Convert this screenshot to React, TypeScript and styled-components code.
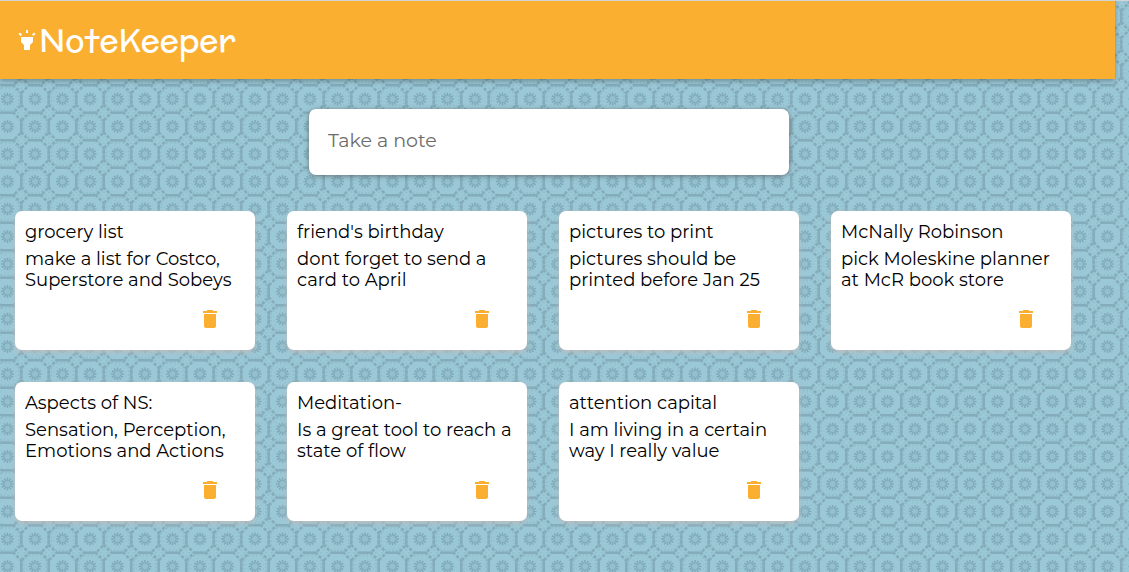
import React from 'react';
import styled, { createGlobalStyle } from 'styled-components';
import { MdDelete, MdHighlight } from 'react-icons/md';

type Point = [number, number];

const TILE = 55;
const HALF = TILE / 2;
const EDGE = HALF / 2;

const around = (count: number, radius: number, turn = 0): Point[] =>
  Array.from({ length: count }, (_, i) => {
    const a = ((i + turn) / count) * Math.PI * 2;
    return [Math.cos(a) * radius, Math.sin(a) * radius];
  });

const dots = (points: Point[], cx: number, cy: number, r: number, fill: string) =>
  points
    .map(([x, y]) => `<circle cx='${(cx + x).toFixed(1)}' cy='${(cy + y).toFixed(1)}' r='${r}' fill='${fill}'/>`)
    .join('');

/* Octagon whose straight sides lie on the cell border and whose corners are cut off. */
const octagon = (cx: number, cy: number, reach: number, side: number) => {
  const corners: Point[] = [
    [-side, -reach], [side, -reach], [reach, -side], [reach, side],
    [side, reach], [-side, reach], [-reach, side], [-reach, -side],
  ];
  return corners.map(([x, y]) => `${cx + x},${cy + y}`).join(' ');
};

/* One octagon of the wallpaper: its beaded rim, optional lace and a twelve-petal flower. */
const medallion = (cx: number, cy: number, laced: boolean) => {
  const petals = around(12, 1)
    .map(([x, y]) => `M${cx + x * 3} ${cy + y * 3}L${cx + x * 6.6} ${cy + y * 6.6}`)
    .join('');
  const lace = laced
    ? `<polygon points='${octagon(cx, cy, 11.2, 6)}' fill='none' stroke='#8fbdc9' stroke-width='2' stroke-dasharray='1.8 1.8'/>` +
      dots(around(12, 8.6, 0.5), cx, cy, 0.8, '#91c1cc')
    : '';
  return (
    lace +
    `<circle cx='${cx}' cy='${cy}' r='4.4' fill='#92bfce'/>` +
    `<path d='${petals}' stroke='#80aabb' stroke-width='1.6'/>` +
    `<circle cx='${cx}' cy='${cy}' r='2.2' fill='#93c1cb'/>` +
    `<polygon points='${octagon(cx, cy, EDGE, 6)}' fill='none' stroke='#84acbb' stroke-width='2.6' stroke-dasharray='3.4 1.6' stroke-dashoffset='-1'/>` +
    dots(around(4, 3), cx + EDGE, cy + EDGE, 1, '#8fbec9')
  );
};

const tile =
  `<svg xmlns='http://www.w3.org/2000/svg' width='${TILE}' height='${TILE}' viewBox='0 0 ${TILE} ${TILE}'>` +
  [-1, 0, 1, 2]
    .flatMap((row) => [-1, 0, 1, 2].map((col) => medallion(7.5 + col * HALF, 16.5 + row * HALF, (row + col) % 2 !== 0)))
    .join('') +
  '</svg>';

const pattern = `data:image/svg+xml,${encodeURIComponent(tile).replace(/'/g, '%27')}`;

const GlobalStyle = createGlobalStyle`
  * {
    box-sizing: border-box;
  }
  body {
    margin: 0;
    min-height: 100vh;
    background: #9bc8d7 url("${pattern}");
    border-top: 1px solid #d0d4d6;
    font-family: Montserrat, Inter, sans-serif;
    color: #000;
  }
`;

const Header = styled.header`
  display: flex;
  align-items: center;
  height: 78px;
  margin-right: 14px;
  padding: 0 15px;
  background: #fbaf30;
  box-shadow: 0 2px 5px rgba(0, 0, 0, 0.3);
`;

const Brand = styled.h1`
  display: flex;
  align-items: center;
  margin: 0;
  color: #fff;
  font-family: McLaren, Inter, sans-serif;
  font-size: 32px;
  font-weight: 500;
  line-height: 48px;
`;

const Main = styled.main`
  padding: 30px 31px 30px 0;
`;

const NoteForm = styled.form`
  width: 480px;
  max-width: 90%;
  margin: 0 auto 36px;
  padding: 10px 15px;
  background: #fff;
  border-radius: 7px;
  box-shadow: 0 1px 5px rgba(80, 80, 80, 0.7);
`;

const NoteInput = styled.input`
  display: block;
  width: 100%;
  height: 46px;
  padding: 0 4px 3px;
  border: 0;
  outline: 0;
  background: transparent;
  font-family: inherit;
  font-size: 19px;

  &::placeholder {
    color: #6c6c6c;
    opacity: 1;
  }
`;

const Notes = styled.section`
  display: flex;
  flex-wrap: wrap;
  gap: 32px;
  padding-left: 15px;
`;

const Card = styled.article`
  display: flex;
  flex-direction: column;
  width: 240px;
  min-height: 139px;
  padding: 11px 10px 10px;
  background: #fff;
  border-radius: 7px;
  box-shadow: 0 2px 5px #bbb;
`;

const Title = styled.h2`
  margin: 0 0 6px;
  font-size: 18px;
  font-weight: 400;
  line-height: 21px;
`;

const Content = styled.p`
  margin: 0;
  font-size: 18px;
  line-height: 21px;
`;

const DeleteButton = styled.button`
  display: flex;
  align-self: flex-end;
  margin: 16px 23px 0 0;
  padding: 0;
  border: 0;
  background: transparent;
  color: #fbaf30;
  cursor: pointer;
`;

const notes = [
  { title: 'grocery list', content: 'make a list for Costco, Superstore and Sobeys' },
  { title: "friend's birthday", content: 'dont forget to send a card to April' },
  { title: 'pictures to print', content: 'pictures should be printed before Jan 25' },
  { title: 'McNally Robinson', content: 'pick Moleskine planner at McR book store' },
  { title: 'Aspects of NS:', content: 'Sensation, Perception, Emotions and Actions' },
  { title: 'Meditation-', content: 'Is a great tool to reach a state of flow' },
  { title: 'attention capital', content: 'I am living in a certain way I really value' },
];

export default function App() {
  return (
    <>
      <GlobalStyle />
      <Header>
        <Brand>
          <MdHighlight size={24} aria-hidden />
          NoteKeeper
        </Brand>
      </Header>
      <Main>
        <NoteForm onSubmit={(event) => event.preventDefault()}>
          <NoteInput aria-label="Take a note" placeholder="Take a note" />
        </NoteForm>
        <Notes>
          {notes.map((note) => (
            <Card key={note.title}>
              <Title>{note.title}</Title>
              <Content>{note.content}</Content>
              <DeleteButton type="button" aria-label={`Delete ${note.title}`}>
                <MdDelete size={24} />
              </DeleteButton>
            </Card>
          ))}
        </Notes>
      </Main>
    </>
  );
}
